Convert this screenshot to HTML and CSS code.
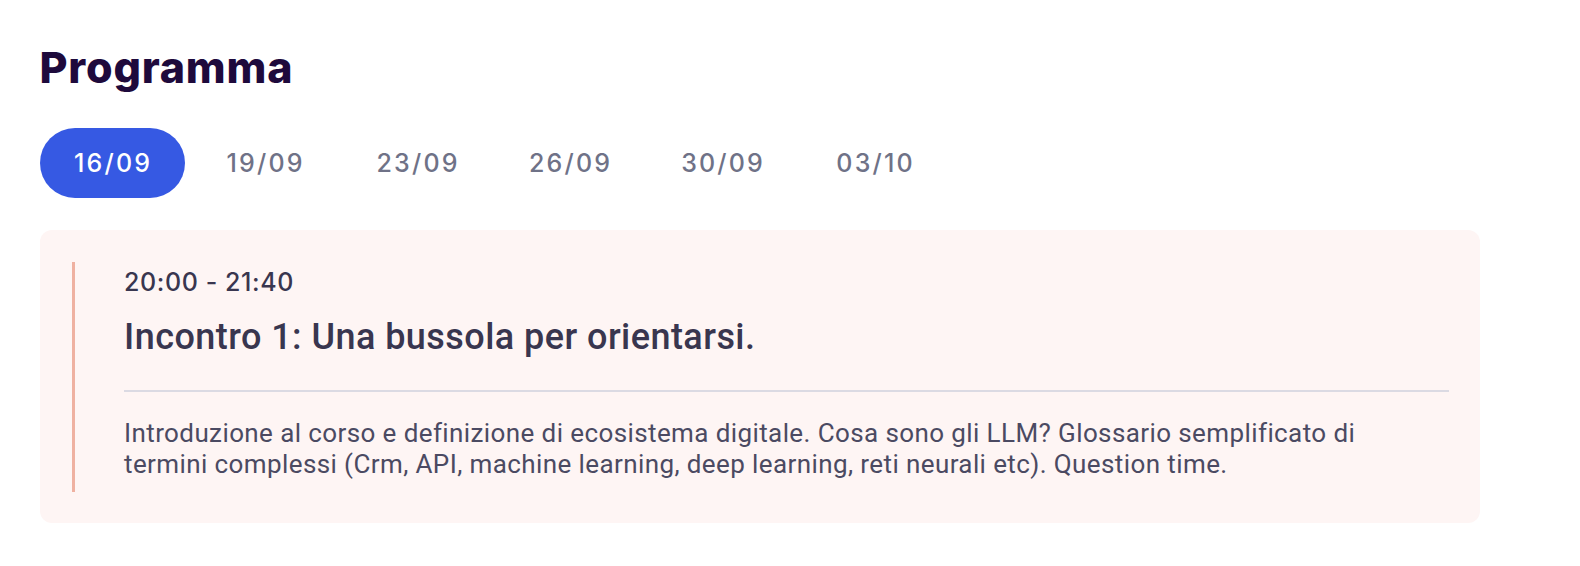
FILE: index.html
```html
<!DOCTYPE html>
<html lang="it">
<head>
  <meta charset="UTF-8">
  <meta name="viewport" content="width=device-width, initial-scale=1.0">
  <title>Programma</title>
  <link rel="stylesheet" href="styles.css">
</head>
<body>
  <div class="agenda">
    <h2 class="agenda-title">Programma</h2>

    <ul class="tabs">
      <li class="tab active">16/09</li>
      <li class="tab">19/09</li>
      <li class="tab">23/09</li>
      <li class="tab">26/09</li>
      <li class="tab">30/09</li>
      <li class="tab">03/10</li>
    </ul>

    <div class="slot-card">
      <div class="slot">
        <p class="slot-time">20:00 - 21:40</p>
        <h3 class="slot-name">Incontro 1: Una bussola per orientarsi.</h3>
        <hr class="slot-divider">
        <p class="slot-desc">Introduzione al corso e definizione di ecosistema digitale. Cosa sono gli LLM? Glossario semplificato di termini complessi (Crm, API, machine learning, deep learning, reti neurali etc). Question time.</p>
      </div>
    </div>
  </div>
</body>
</html>
```

FILE: styles.css
```css
body {
  margin: 0;
  padding: 0;
  background-color: #ffffff;
  font-family: Roboto, "Liberation Sans", sans-serif;
  color: #39364f;
}
.agenda {
  width: 1440px;
  padding: 43px 0 0 39.5px;
}
.agenda-title {
  margin: 0;
  font-family: Inter, "Liberation Sans", sans-serif;
  font-weight: 800;
  font-size: 43px;
  line-height: 48px;
  letter-spacing: 0.8px;
  color: #1e0a3c;
}
.tabs {
  display: flex;
  gap: 7.5px;
  list-style: none;
  margin: 37px 0 0 0;
  padding: 0;
}
.tab {
  width: 145px;
  height: 70px;
  display: flex;
  justify-content: center;
  align-items: center;
  border-radius: 35px;
  font-family: Inter, "Liberation Sans", sans-serif;
  font-weight: 500;
  font-size: 25px;
  letter-spacing: 2.2px;
  text-indent: 2.2px;
  color: #6f7287;
}
.tab.active {
  background-color: #3659e3;
  color: #ffffff;
}
.slot-card {
  margin-top: 32px;
  padding: 32px 31px 31px 32px;
  background-color: #fef5f4;
  border-radius: 12px;
}
.slot {
  border-left: 3px solid #efb1a1;
  padding: 0 0 12px 49.5px;
}
.slot-time {
  margin: 0;
  font-family: Inter, "Liberation Sans", sans-serif;
  font-weight: 500;
  font-size: 25px;
  line-height: 40px;
  letter-spacing: 0.6px;
  color: #39364f;
}
.slot-name {
  margin: 15px 0 0 0;
  font-weight: 500;
  font-size: 36px;
  line-height: 40px;
  letter-spacing: 0.45px;
  color: #39364f;
}
.slot-divider {
  margin: 33px 0 0 0;
  border: none;
  border-top: 2px solid #dbdae3;
}
.slot-desc {
  max-width: 1270px;
  margin: 25.5px 0 0 0;
  font-size: 26px;
  line-height: 31px;
  letter-spacing: 0.4px;
  color: #4b4a62;
}
```
